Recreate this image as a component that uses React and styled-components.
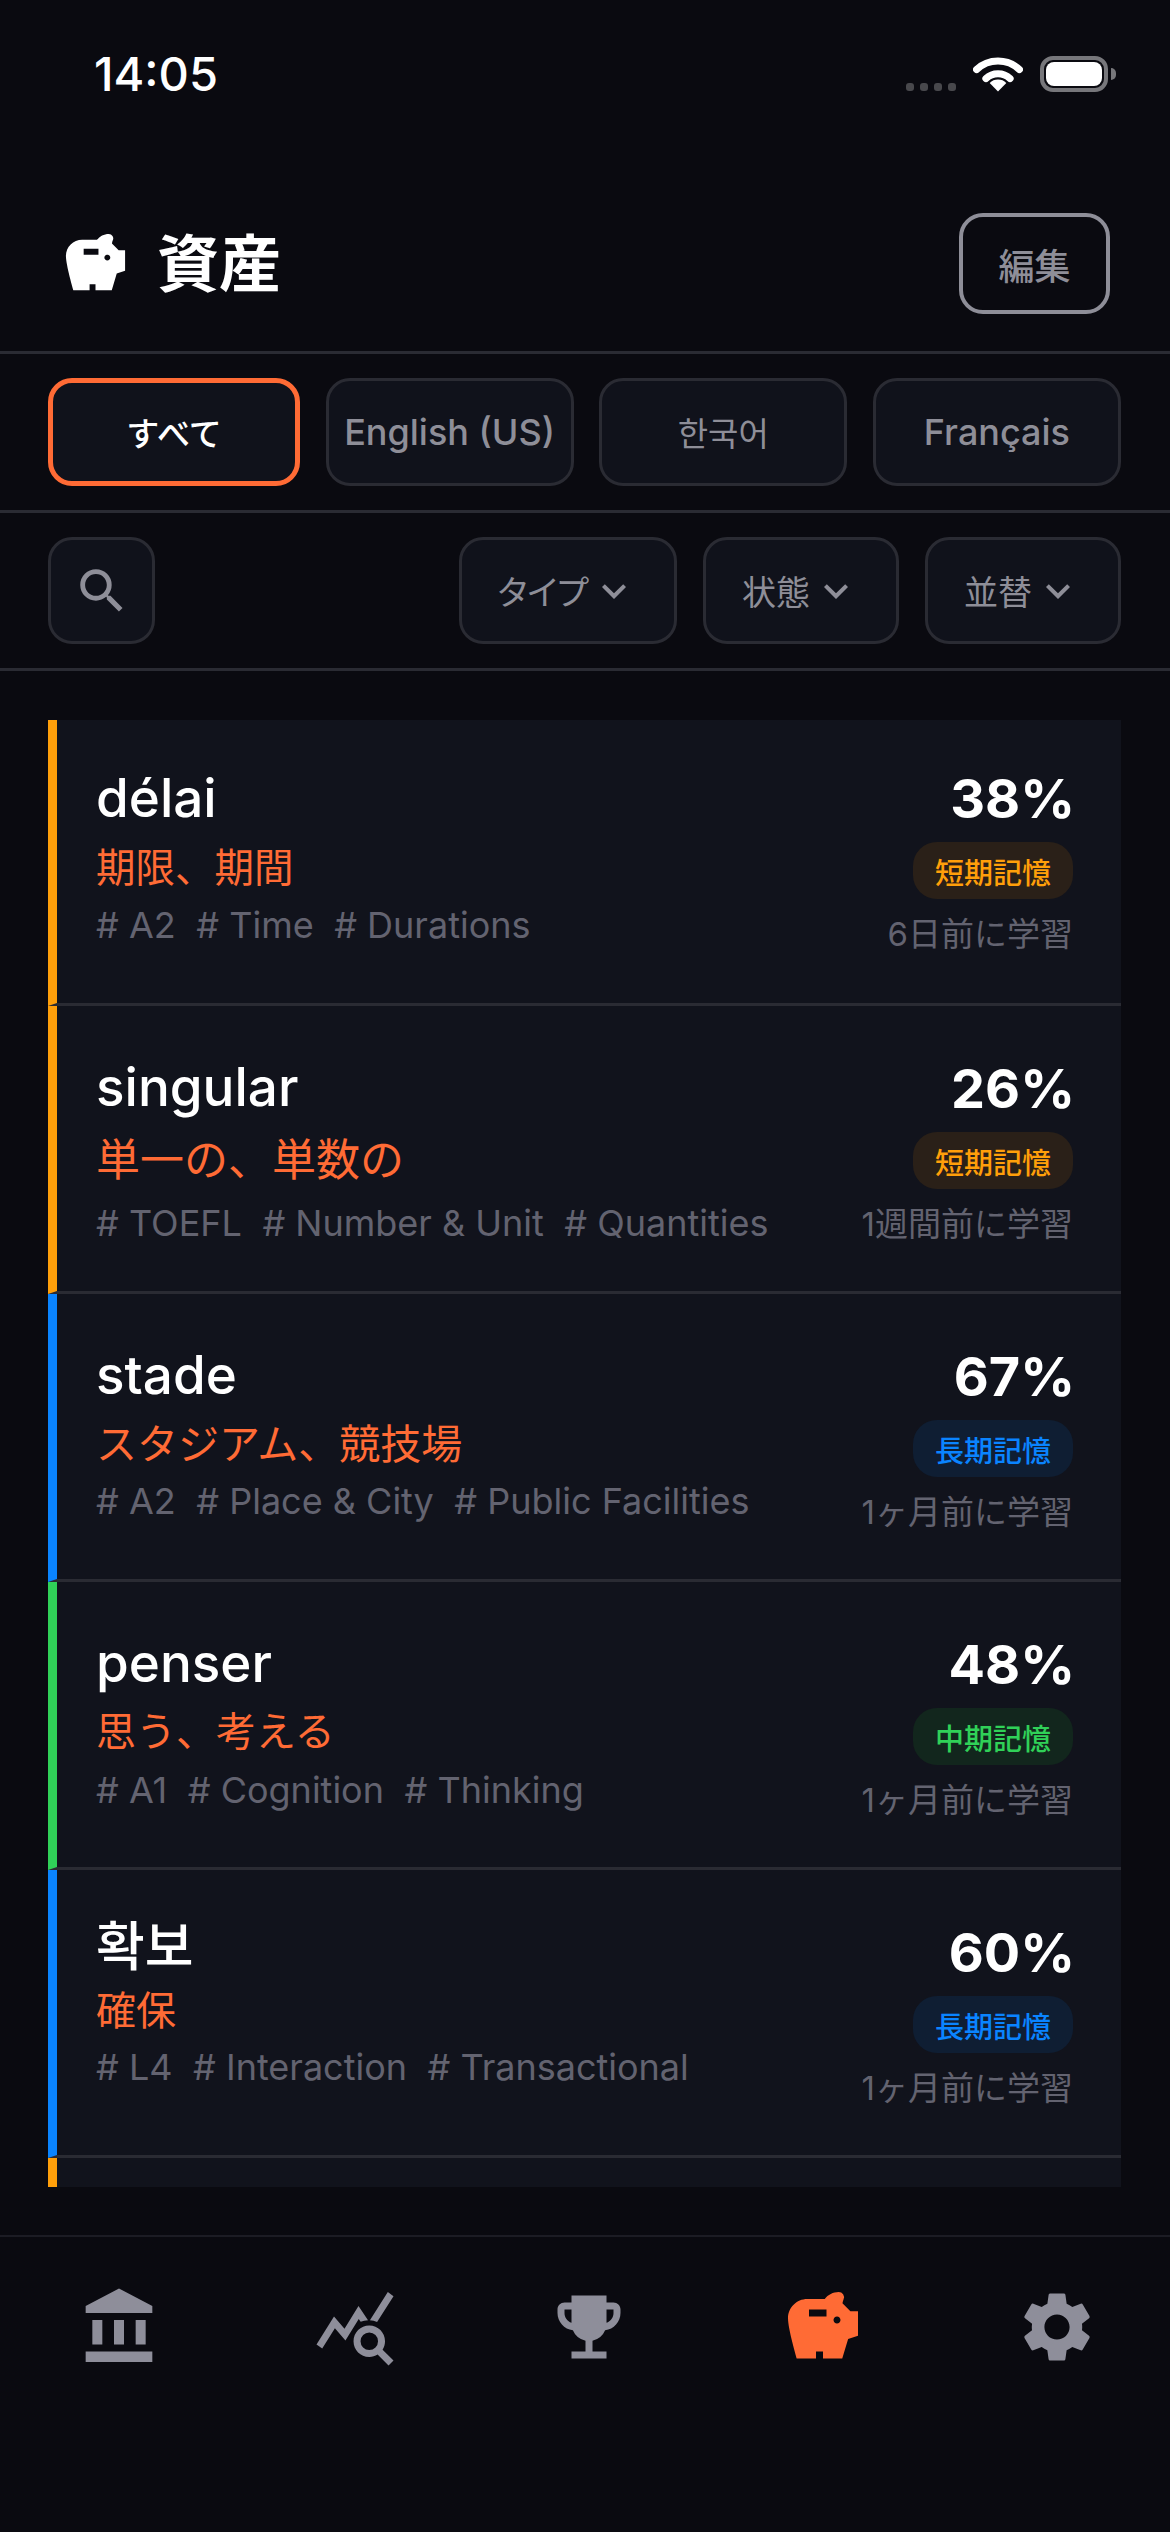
import React from 'react';
import styled, { createGlobalStyle } from 'styled-components';
import {
  MdEmojiEvents,
  MdKeyboardArrowDown,
  MdQueryStats,
  MdSavings,
  MdSearch,
  MdSettings,
} from 'react-icons/md';

const FONT = `Inter, "Noto Sans CJK JP", "Noto Sans CJK KR", sans-serif`;

const tones = {
  short: { bar: '#ff9f0a', pill: '#2a2018' },
  long: { bar: '#0a84ff', pill: '#0f1e33' },
  mid: { bar: '#30d158', pill: '#12261d' },
};

const words = [
  { word: 'délai', meaning: '期限、期間', tags: ['A2', 'Time', 'Durations'], pct: 38, tone: 'short', badge: '短期記憶', when: '6日前に学習', top: 46, mGap: 10, tGap: 7, size: 39.5 },
  { word: 'singular', meaning: '単一の、単数の', tags: ['TOEFL', 'Number & Unit', 'Quantities'], pct: 26, tone: 'short', badge: '短期記憶', when: '1週間前に学習', top: 49, mGap: 13, tGap: 13, size: 44 },
  { word: 'stade', meaning: 'スタジアム、競技場', tags: ['A2', 'Place & City', 'Public Facilities'], pct: 67, tone: 'long', badge: '長期記憶', when: '1ヶ月前に学習', top: 49, mGap: 9, tGap: 7, size: 41 },
  { word: 'penser', meaning: '思う、考える', tags: ['A1', 'Cognition', 'Thinking'], pct: 48, tone: 'mid', badge: '中期記憶', when: '1ヶ月前に学習', top: 49, mGap: 9, tGap: 8, size: 40 },
  { word: '확보', meaning: '確保', tags: ['L4', 'Interaction', 'Transactional'], pct: 60, tone: 'long', badge: '長期記憶', when: '1ヶ月前に学習', top: 45, mGap: 4, tGap: 6, size: 40 },
];

const GlobalStyle = createGlobalStyle`
  html, body {
    margin: 0;
    background: #0a0a10;
  }
  * {
    box-sizing: border-box;
  }
`;

function WifiIcon() {
  return (
    <svg width="50" height="36" viewBox="0 0 48 36" preserveAspectRatio="none" fill="none">
      <path d="M3.5 13.5a29 29 0 0 1 41 0" stroke="#fff" strokeWidth="7" strokeLinecap="round" />
      <path d="M12.5 22.5a16.5 16.5 0 0 1 23 0" stroke="#fff" strokeWidth="7" strokeLinecap="round" />
      <path d="M24 35.5l-8-8.5a11 11 0 0 1 16 0z" fill="#fff" />
    </svg>
  );
}

// the bank glyph in the tab bar is a bit narrower than it is tall
function BankIcon() {
  return (
    <svg width="80" height="84" viewBox="0 0 24 24" preserveAspectRatio="none" fill="currentColor">
      <path d="M4 10h3v7H4zM10.5 10h3v7h-3zM2 19h20v3H2zM17 10h3v7h-3zM12 1L2 6v2h20V6z" />
    </svg>
  );
}

export default function App() {
  return (
    <Screen>
      <GlobalStyle />
      <StatusBar>
        <Clock>14:05</Clock>
        <StatusIcons>
          <Dots>
            <i /><i /><i /><i />
          </Dots>
          <WifiIcon />
          <Battery>
            <BatteryFill />
          </Battery>
        </StatusIcons>
      </StatusBar>

      <Header>
        <TitleGroup>
          <MdSavings size={71} color="#fff" />
          <Title>資産</Title>
        </TitleGroup>
        <EditButton>編集</EditButton>
      </Header>

      <TabRow>
        <Tab $active $size={33}>すべて</Tab>
        <Tab>English (US)</Tab>
        <Tab $size={33}>한국어</Tab>
        <Tab>Français</Tab>
      </TabRow>

      <FilterRow>
        <SearchButton>
          <MdSearch size={58} />
        </SearchButton>
        <Filters>
          <FilterButton $width={218}>タイプ<MdKeyboardArrowDown size={48} /></FilterButton>
          <FilterButton $width={196}>状態<MdKeyboardArrowDown size={48} /></FilterButton>
          <FilterButton $width={196}>並替<MdKeyboardArrowDown size={48} /></FilterButton>
        </Filters>
      </FilterRow>

      <WordList>
        {words.map((w) => (
          <WordRow key={w.word} $bar={tones[w.tone].bar}>
            <WordText $top={w.top}>
              <Word>{w.word}</Word>
              <Meaning $gap={w.mGap} $size={w.size}>{w.meaning}</Meaning>
              <Tags $gap={w.tGap}>
                {w.tags.map((t) => <span key={t}># {t}</span>)}
              </Tags>
            </WordText>
            <WordStats>
              <Percent>{w.pct}%</Percent>
              <Badge $color={tones[w.tone].bar} $bg={tones[w.tone].pill}>{w.badge}</Badge>
              <Studied>{w.when}</Studied>
            </WordStats>
          </WordRow>
        ))}
        <WordRow $bar={tones.short.bar} />
      </WordList>

      <BottomNav>
        <NavItem><BankIcon /></NavItem>
        <NavItem><MdQueryStats size={84} /></NavItem>
        <NavItem><MdEmojiEvents size={84} /></NavItem>
        <NavItem $active><MdSavings size={84} /></NavItem>
        <NavItem><MdSettings size={84} /></NavItem>
      </BottomNav>
    </Screen>
  );
}

const Screen = styled.div`
  width: 1170px;
  height: 2532px;
  overflow: hidden;
  display: flex;
  flex-direction: column;
  background: #0a0a10;
  font-family: ${FONT};
  color: #fff;
`;

const StatusBar = styled.div`
  height: 148px;
  padding: 49px 62px 0 94px;
  display: flex;
  justify-content: space-between;
  align-items: flex-start;
`;

const Clock = styled.div`
  font-size: 47px;
  line-height: 50px;
  font-weight: 500;
`;

const StatusIcons = styled.div`
  display: flex;
  align-items: flex-end;
  padding-top: 7px;
  height: 43px;
`;

const Dots = styled.div`
  display: flex;
  gap: 6px;
  margin-right: 17px;
  padding-bottom: 1px;
  & i {
    width: 8px;
    height: 8px;
    border-radius: 3px;
    background: #48484c;
  }
`;

const Battery = styled.div`
  position: relative;
  width: 68px;
  height: 36px;
  margin-left: 17px;
  padding: 2px;
  border: 4px solid #77777b;
  border-radius: 13px;
  &::after {
    content: '';
    position: absolute;
    right: -12px;
    top: 8px;
    width: 5px;
    height: 12px;
    border-radius: 0 6px 6px 0;
    background: #77777b;
  }
`;

const BatteryFill = styled.div`
  height: 100%;
  border-radius: 8px;
  background: #fff;
`;

const Header = styled.header`
  display: flex;
  justify-content: space-between;
  align-items: center;
  padding: 65px 60px 37px;
  border-bottom: 3px solid #2a2b33;
`;

const TitleGroup = styled.div`
  display: flex;
  align-items: center;
  gap: 26px;
`;

const Title = styled.h1`
  margin: 2px 0 0;
  font-size: 62px;
  line-height: 70px;
  font-weight: 700;
`;

const EditButton = styled.button`
  width: 151px;
  height: 101px;
  padding: 0;
  border: 4px solid #8e8e98;
  border-radius: 24px;
  background: transparent;
  color: #8e8e98;
  font-family: ${FONT};
  font-size: 36px;
  font-weight: 500;
`;

const TabRow = styled.div`
  display: flex;
  gap: 25.5px;
  padding: 24px 49px 24px 48px;
  border-bottom: 3px solid #2a2b33;
`;

const Tab = styled.button`
  flex: ${(p) => (p.$active ? '0 0 252px' : '1 1 0')};
  height: 108px;
  padding: 0;
  border: ${(p) => (p.$active ? '5px solid #ff6b35' : '3px solid #2a2b33')};
  border-radius: 24px;
  background: #10121b;
  color: ${(p) => (p.$active ? '#fff' : '#8e8e98')};
  font-family: ${FONT};
  font-size: ${(p) => p.$size || 36}px;
  font-weight: ${(p) => (p.$size && !p.$active ? 400 : 500)};
  white-space: nowrap;
`;

const FilterRow = styled.div`
  display: flex;
  justify-content: space-between;
  padding: 24px 49px 24px 48px;
  border-bottom: 3px solid #2a2b33;
`;

const SearchButton = styled.button`
  width: 107px;
  height: 107px;
  padding: 0;
  display: flex;
  align-items: center;
  justify-content: center;
  border: 3px solid #2a2b33;
  border-radius: 24px;
  background: #10121b;
  color: #8e8e98;
`;

const Filters = styled.div`
  display: flex;
  gap: 26px;
`;

const FilterButton = styled.button`
  width: ${(p) => p.$width}px;
  height: 107px;
  padding: 0;
  display: flex;
  align-items: center;
  justify-content: center;
  gap: 2px;
  border: 3px solid #2a2b33;
  border-radius: 24px;
  background: #10121b;
  color: #8e8e98;
  font-family: ${FONT};
  font-feature-settings: "palt";
  font-size: 34px;
  font-weight: 400;
`;

const WordList = styled.div`
  height: 1467px;
  margin: 49px 49px 0 48px;
  overflow: hidden;
  background: #11131c;
`;

const WordRow = styled.article`
  height: 288px;
  display: flex;
  justify-content: space-between;
  padding: 0 46px 0 39px;
  border-left: 9px solid ${(p) => p.$bar};
  border-bottom: 3px solid #2a2b33;
  &:first-child {
    height: 286px;
  }
`;

const WordText = styled.div`
  padding-top: ${(p) => p.$top}px;
`;

const Word = styled.div`
  font-size: 53px;
  line-height: 64px;
  font-weight: 500;
`;

const Meaning = styled.div`
  margin-top: ${(p) => p.$gap}px;
  font-size: ${(p) => p.$size}px;
  line-height: 56px;
  color: #ff6b35;
`;

const Tags = styled.div`
  display: flex;
  gap: 20.5px;
  margin-top: ${(p) => p.$gap}px;
  font-size: 36px;
  line-height: 44px;
  color: #636370;
  white-space: nowrap;
`;

const WordStats = styled.div`
  display: flex;
  flex-direction: column;
  align-items: flex-end;
  padding-top: 55px;
  ${WordRow}:first-child & {
    padding-top: 51px;
  }
`;

const Percent = styled.div`
  font-size: 54px;
  line-height: 56px;
  font-weight: 700;
`;

const Badge = styled.div`
  height: 57px;
  margin: 15px 2px 0 0;
  padding: 0 22px;
  display: flex;
  align-items: center;
  border-radius: 24px;
  background: ${(p) => p.$bg};
  color: ${(p) => p.$color};
  font-size: 29px;
  font-weight: 500;
`;

const Studied = styled.div`
  margin: 15px 2px 0 0;
  font-size: 33px;
  line-height: 40px;
  color: #636370;
  white-space: nowrap;
`;

const BottomNav = styled.nav`
  margin-top: 48px;
  padding: 48px 71px 0 79px;
  display: flex;
  justify-content: space-between;
  border-top: 2px solid #1c1c24;
`;

const NavItem = styled.div`
  width: 84px;
  height: 84px;
  color: ${(p) => (p.$active ? '#ff6b35' : '#8e8e9a')};
`;
